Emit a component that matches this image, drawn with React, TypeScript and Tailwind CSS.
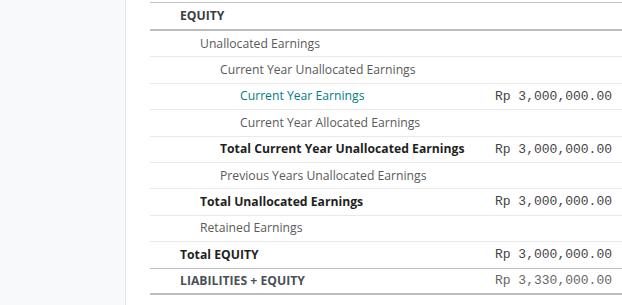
const rows: {
  label: string;
  level: number;
  amount?: string;
  kind: "normal" | "bold" | "link";
  border: string;
}[] = [
  { label: "Unallocated Earnings", level: 1, kind: "normal", border: "border-b border-[#e9e9e9]" },
  { label: "Current Year Unallocated Earnings", level: 2, kind: "normal", border: "border-b border-[#e9e9e9]" },
  { label: "Current Year Earnings", level: 3, amount: "Rp 3,000,000.00", kind: "link", border: "border-b border-[#e9e9e9]" },
  { label: "Current Year Allocated Earnings", level: 3, kind: "normal", border: "border-b border-[#e9e9e9]" },
  { label: "Total Current Year Unallocated Earnings", level: 2, amount: "Rp 3,000,000.00", kind: "bold", border: "border-b border-[#e9e9e9]" },
  { label: "Previous Years Unallocated Earnings", level: 2, kind: "normal", border: "border-b border-[#e9e9e9]" },
  { label: "Total Unallocated Earnings", level: 1, amount: "Rp 3,000,000.00", kind: "bold", border: "border-b border-[#e9e9e9]" },
  { label: "Retained Earnings", level: 1, kind: "normal", border: "border-b border-[#e9e9e9]" },
  { label: "Total EQUITY", level: 0, amount: "Rp 3,000,000.00", kind: "bold", border: "border-b border-[#bdbdbd]" },
];

const indent = ["pl-[30px]", "pl-[50px]", "pl-[70px]", "pl-[90px]"];

const labelColor = {
  normal: "text-[#5a5a5a]",
  bold: "font-bold text-[#1f1f1f]",
  link: "text-[#017e84]",
};

export default function App() {
  return (
    <div className="flex h-[305px] w-[622px] overflow-hidden bg-white font-['Open_Sans',sans-serif] text-[12.2px]">
      <div className="w-[126px] shrink-0 border-r border-[#e3e5e8] bg-[#f8f9fb]" />
      <div className="flex-1 pl-[24px] pt-[2px]">
        <div className="border-t border-[#c4c4c4]">
          <div className="flex h-[26px] items-center pl-[30px] font-bold text-[#3a3f45]">EQUITY</div>
          <div className="border-b-2 border-[#bdbdbd]" />
          {rows.map((r) => (
            <div key={r.label} className={`flex h-[26.4px] items-center justify-between pr-[10px] ${r.border}`}>
              <span className={`${indent[r.level]} ${labelColor[r.kind]}`}>{r.label}</span>
              {r.amount && (
                <span className="font-['Liberation_Mono',monospace] text-[13px] text-[#444]">{r.amount}</span>
              )}
            </div>
          ))}
          <div className="flex h-[26.4px] items-center justify-between border-b-2 border-[#bdbdbd] pr-[10px]">
            <span className="pl-[30px] font-bold text-[#4a5058]">LIABILITIES + EQUITY</span>
            <span className="font-['Liberation_Mono',monospace] text-[13px] text-[#666]">Rp 3,330,000.00</span>
          </div>
        </div>
      </div>
    </div>
  );
}
